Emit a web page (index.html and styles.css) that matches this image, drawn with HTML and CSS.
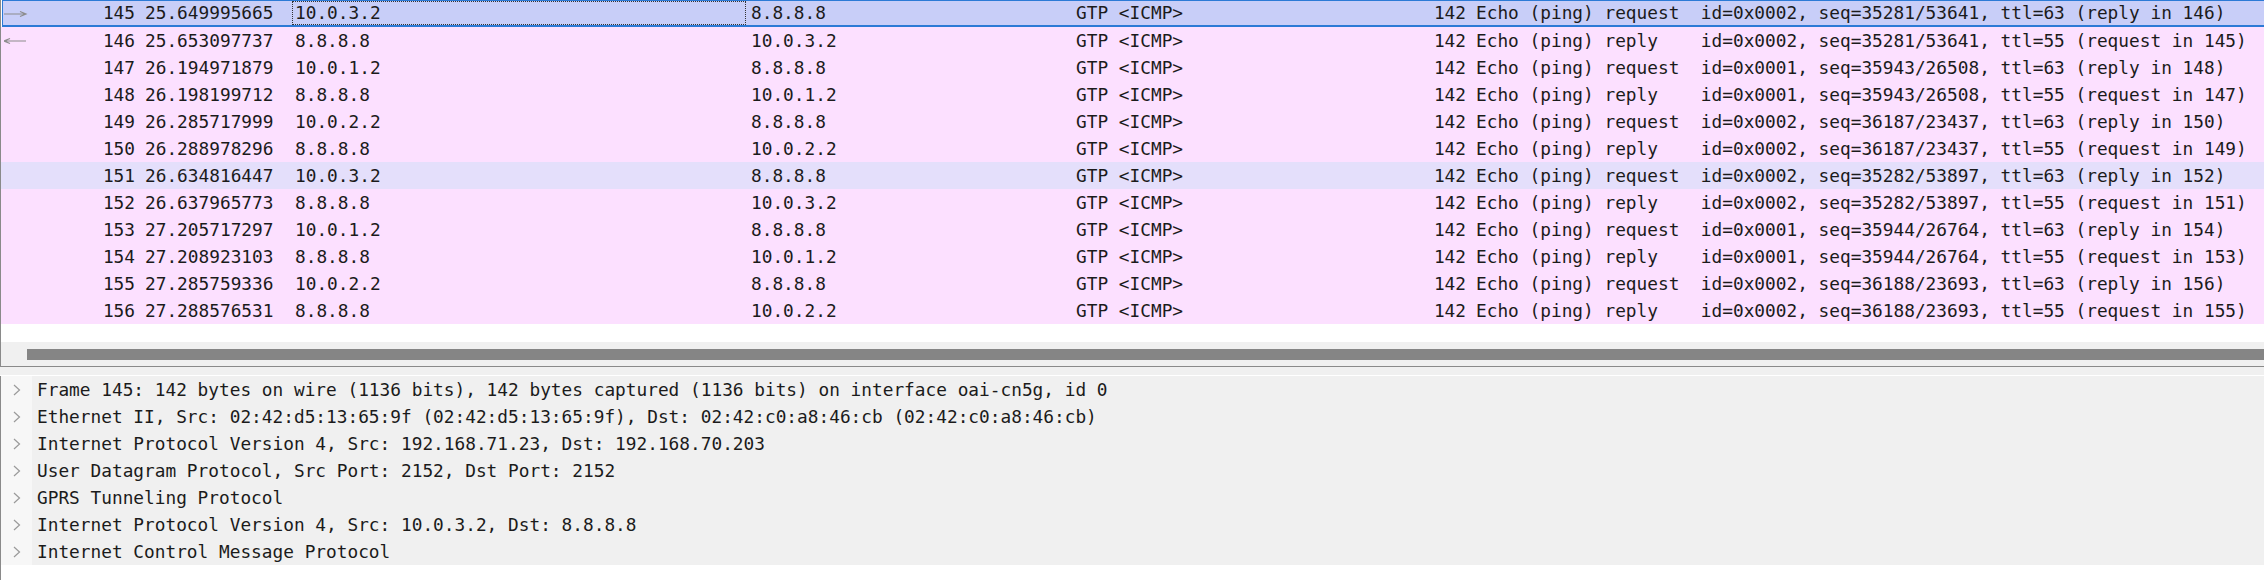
FILE: index.html
```html
<!DOCTYPE html>
<html>
<head>
<meta charset="utf-8">
<link rel="stylesheet" href="styles.css">
</head>
<body>
<div class="packet-pane">
  <div class="rows">
    <div class="row selected">
      <div class="c no"><svg class="rel" width="24" height="8" viewBox="0 0 24 8"><path d="M0 4H22M16 1.5L22 4L16 6.5" fill="none" stroke="#8c8c8c" stroke-width="1.2"/></svg>145</div>
      <div class="c">25.649995665</div>
      <div class="c focus">10.0.3.2</div>
      <div class="c">8.8.8.8</div>
      <div class="c">GTP &lt;ICMP&gt;</div>
      <div class="c len">142</div>
      <div class="c info">Echo (ping) request  id=0x0002, seq=35281/53641, ttl=63 (reply in 146)</div>
    </div>
    <div class="row">
      <div class="c no"><svg class="rel" width="24" height="8" viewBox="0 0 24 8"><path d="M0 4H22M6 1.5L0 4L6 6.5" fill="none" stroke="#8c8c8c" stroke-width="1.2"/></svg>146</div>
      <div class="c">25.653097737</div>
      <div class="c">8.8.8.8</div>
      <div class="c">10.0.3.2</div>
      <div class="c">GTP &lt;ICMP&gt;</div>
      <div class="c len">142</div>
      <div class="c info">Echo (ping) reply    id=0x0002, seq=35281/53641, ttl=55 (request in 145)</div>
    </div>
    <div class="row">
      <div class="c no">147</div>
      <div class="c">26.194971879</div>
      <div class="c">10.0.1.2</div>
      <div class="c">8.8.8.8</div>
      <div class="c">GTP &lt;ICMP&gt;</div>
      <div class="c len">142</div>
      <div class="c info">Echo (ping) request  id=0x0001, seq=35943/26508, ttl=63 (reply in 148)</div>
    </div>
    <div class="row">
      <div class="c no">148</div>
      <div class="c">26.198199712</div>
      <div class="c">8.8.8.8</div>
      <div class="c">10.0.1.2</div>
      <div class="c">GTP &lt;ICMP&gt;</div>
      <div class="c len">142</div>
      <div class="c info">Echo (ping) reply    id=0x0001, seq=35943/26508, ttl=55 (request in 147)</div>
    </div>
    <div class="row">
      <div class="c no">149</div>
      <div class="c">26.285717999</div>
      <div class="c">10.0.2.2</div>
      <div class="c">8.8.8.8</div>
      <div class="c">GTP &lt;ICMP&gt;</div>
      <div class="c len">142</div>
      <div class="c info">Echo (ping) request  id=0x0002, seq=36187/23437, ttl=63 (reply in 150)</div>
    </div>
    <div class="row">
      <div class="c no">150</div>
      <div class="c">26.288978296</div>
      <div class="c">8.8.8.8</div>
      <div class="c">10.0.2.2</div>
      <div class="c">GTP &lt;ICMP&gt;</div>
      <div class="c len">142</div>
      <div class="c info">Echo (ping) reply    id=0x0002, seq=36187/23437, ttl=55 (request in 149)</div>
    </div>
    <div class="row hover">
      <div class="c no">151</div>
      <div class="c">26.634816447</div>
      <div class="c">10.0.3.2</div>
      <div class="c">8.8.8.8</div>
      <div class="c">GTP &lt;ICMP&gt;</div>
      <div class="c len">142</div>
      <div class="c info">Echo (ping) request  id=0x0002, seq=35282/53897, ttl=63 (reply in 152)</div>
    </div>
    <div class="row">
      <div class="c no">152</div>
      <div class="c">26.637965773</div>
      <div class="c">8.8.8.8</div>
      <div class="c">10.0.3.2</div>
      <div class="c">GTP &lt;ICMP&gt;</div>
      <div class="c len">142</div>
      <div class="c info">Echo (ping) reply    id=0x0002, seq=35282/53897, ttl=55 (request in 151)</div>
    </div>
    <div class="row">
      <div class="c no">153</div>
      <div class="c">27.205717297</div>
      <div class="c">10.0.1.2</div>
      <div class="c">8.8.8.8</div>
      <div class="c">GTP &lt;ICMP&gt;</div>
      <div class="c len">142</div>
      <div class="c info">Echo (ping) request  id=0x0001, seq=35944/26764, ttl=63 (reply in 154)</div>
    </div>
    <div class="row">
      <div class="c no">154</div>
      <div class="c">27.208923103</div>
      <div class="c">8.8.8.8</div>
      <div class="c">10.0.1.2</div>
      <div class="c">GTP &lt;ICMP&gt;</div>
      <div class="c len">142</div>
      <div class="c info">Echo (ping) reply    id=0x0001, seq=35944/26764, ttl=55 (request in 153)</div>
    </div>
    <div class="row">
      <div class="c no">155</div>
      <div class="c">27.285759336</div>
      <div class="c">10.0.2.2</div>
      <div class="c">8.8.8.8</div>
      <div class="c">GTP &lt;ICMP&gt;</div>
      <div class="c len">142</div>
      <div class="c info">Echo (ping) request  id=0x0002, seq=36188/23693, ttl=63 (reply in 156)</div>
    </div>
    <div class="row">
      <div class="c no">156</div>
      <div class="c">27.288576531</div>
      <div class="c">8.8.8.8</div>
      <div class="c">10.0.2.2</div>
      <div class="c">GTP &lt;ICMP&gt;</div>
      <div class="c len">142</div>
      <div class="c info">Echo (ping) reply    id=0x0002, seq=36188/23693, ttl=55 (request in 155)</div>
    </div>
  </div>
  <div class="hscroll"><div class="thumb"></div></div>
</div>
<div class="splitter"></div>
<div class="detail-pane">
  <div class="tree">
    <div class="item"><span class="chev"><svg width="8" height="12" viewBox="0 0 8 12"><path d="M1 1L6.5 6L1 11" fill="none" stroke="#9a9a9a" stroke-width="1.2"/></svg></span><span class="label">Frame 145: 142 bytes on wire (1136 bits), 142 bytes captured (1136 bits) on interface oai-cn5g, id 0</span></div>
    <div class="item"><span class="chev"><svg width="8" height="12" viewBox="0 0 8 12"><path d="M1 1L6.5 6L1 11" fill="none" stroke="#9a9a9a" stroke-width="1.2"/></svg></span><span class="label">Ethernet II, Src: 02:42:d5:13:65:9f (02:42:d5:13:65:9f), Dst: 02:42:c0:a8:46:cb (02:42:c0:a8:46:cb)</span></div>
    <div class="item"><span class="chev"><svg width="8" height="12" viewBox="0 0 8 12"><path d="M1 1L6.5 6L1 11" fill="none" stroke="#9a9a9a" stroke-width="1.2"/></svg></span><span class="label">Internet Protocol Version 4, Src: 192.168.71.23, Dst: 192.168.70.203</span></div>
    <div class="item"><span class="chev"><svg width="8" height="12" viewBox="0 0 8 12"><path d="M1 1L6.5 6L1 11" fill="none" stroke="#9a9a9a" stroke-width="1.2"/></svg></span><span class="label">User Datagram Protocol, Src Port: 2152, Dst Port: 2152</span></div>
    <div class="item"><span class="chev"><svg width="8" height="12" viewBox="0 0 8 12"><path d="M1 1L6.5 6L1 11" fill="none" stroke="#9a9a9a" stroke-width="1.2"/></svg></span><span class="label">GPRS Tunneling Protocol</span></div>
    <div class="item"><span class="chev"><svg width="8" height="12" viewBox="0 0 8 12"><path d="M1 1L6.5 6L1 11" fill="none" stroke="#9a9a9a" stroke-width="1.2"/></svg></span><span class="label">Internet Protocol Version 4, Src: 10.0.3.2, Dst: 8.8.8.8</span></div>
    <div class="item"><span class="chev"><svg width="8" height="12" viewBox="0 0 8 12"><path d="M1 1L6.5 6L1 11" fill="none" stroke="#9a9a9a" stroke-width="1.2"/></svg></span><span class="label">Internet Control Message Protocol</span></div>
  </div>
</div>
</body>
</html>
```
FILE: styles.css
```css
html, body {
  margin: 0;
  padding: 0;
  background: #ffffff;
  overflow: hidden;
  width: 2264px;
  height: 580px;
}
body {
  font-family: "DejaVu Sans Mono", "Liberation Mono", monospace;
  font-size: 17.8px;
  color: #1b1b1b;
}
.packet-pane {
  height: 366px;
  border-left: 1px solid #8a8a8a;
  border-bottom: 1px solid #8a8a8a;
  display: flex;
  flex-direction: column;
}
.rows {
  height: 342px;
  background: #ffffff;
}
.row {
  display: grid;
  grid-template-columns: 139px 150px 456px 325px 330px 70px 1fr;
  height: 27px;
  align-items: center;
  background: #fce0ff;
  white-space: pre;
  box-sizing: border-box;
}
.row.selected {
  background: #c8cef8;
  border-top: 1px solid #2c7ad6;
  border-left: 1px solid #2c7ad6;
  border-bottom: 2px solid #2c7ad6;
  margin-left: 1px;
  grid-template-columns: 137px 150px 456px 325px 330px 70px 1fr;
}
.row.hover {
  background: #e4dffb;
}
.c {
  padding: 0 5px;
  overflow: hidden;
  height: 27px;
  line-height: 27px;
}
.row.selected .c {
  height: 24px;
  line-height: 24px;
}
.c.no {
  text-align: right;
  position: relative;
}
.rel {
  position: absolute;
  left: 3px;
  top: 10px;
}
.row.selected .rel {
  left: 1px;
  top: 9px;
}
.c.focus {
  outline: 1px dotted #333;
  outline-offset: -1px;
  margin-left: 2px;
  padding-left: 3px;
}
.c.len {
  text-align: right;
}
.hscroll {
  height: 24px;
  background: #f0f0f0;
  display: flex;
  align-items: center;
}
.thumb {
  margin-left: 26px;
  height: 11px;
  flex: 1;
  background: #858585;
}
.splitter {
  height: 8px;
  background: #f0f0f0;
  border-bottom: 1px solid #ffffff;
}
.detail-pane {
  height: 204px;
  border-left: 1px solid #8a8a8a;
  background: #ffffff;
}
.tree {
  display: flex;
  flex-direction: column;
}
.item {
  display: flex;
  height: 27px;
  align-items: center;
}
.chev {
  width: 31px;
  height: 27px;
  display: flex;
  align-items: center;
  padding-left: 12px;
  box-sizing: border-box;
  background: #f7f7f7;
}
.label {
  flex: 1;
  height: 27px;
  line-height: 27px;
  background: #f0f0f0;
  padding-left: 5px;
  white-space: pre;
}
```
